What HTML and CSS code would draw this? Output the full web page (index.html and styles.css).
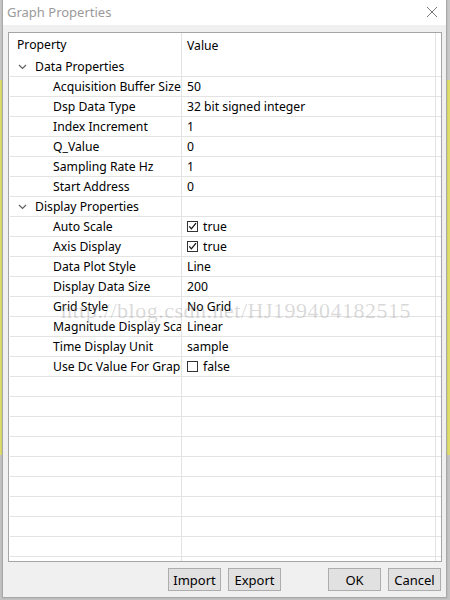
FILE: index.html
```html
<!DOCTYPE html>
<html lang="en">
<head>
  <meta charset="UTF-8" />
  <meta name="viewport" content="width=device-width, initial-scale=1.0">
  <title>Graph Properties</title>
  <link rel="stylesheet" href="styles.css">
</head>
<body>
  <div class="window">
    <div class="titlebar">
      <span class="title">Graph Properties</span>
      <svg class="close" width="12" height="12" viewBox="0 0 12 12">
        <path d="M1 1 L11 11 M11 1 L1 11" stroke="#7a7a7a" stroke-width="1" fill="none" />
      </svg>
    </div>
    <div class="content">
      <div class="grid">
        <div class="head">
          <div class="cell name">Property</div>
          <div class="cell value">Value</div>
        </div>

        <div class="row cat">
          <div class="cell name"><svg class="chev" width="9" height="6" viewBox="0 0 9 6"><path d="M1 1 L4.5 4.5 L8 1" stroke="#606060" stroke-width="1.2" fill="none" /></svg>Data Properties</div>
          <div class="cell value"></div>
        </div>
        <div class="row"><div class="cell name">Acquisition Buffer Size</div><div class="cell value">50</div></div>
        <div class="row"><div class="cell name">Dsp Data Type</div><div class="cell value">32 bit signed integer</div></div>
        <div class="row"><div class="cell name">Index Increment</div><div class="cell value">1</div></div>
        <div class="row"><div class="cell name">Q_Value</div><div class="cell value">0</div></div>
        <div class="row"><div class="cell name">Sampling Rate Hz</div><div class="cell value">1</div></div>
        <div class="row"><div class="cell name">Start Address</div><div class="cell value">0</div></div>

        <div class="row cat">
          <div class="cell name"><svg class="chev" width="9" height="6" viewBox="0 0 9 6"><path d="M1 1 L4.5 4.5 L8 1" stroke="#606060" stroke-width="1.2" fill="none" /></svg>Display Properties</div>
          <div class="cell value"></div>
        </div>
        <div class="row"><div class="cell name">Auto Scale</div><div class="cell value"><svg class="check" width="11" height="11" viewBox="0 0 11 11"><rect x="0.5" y="0.5" width="10" height="10" fill="#fff" stroke="#333" /><path d="M2.3 5.3 L4.4 7.8 L9 2.2" stroke="#111" stroke-width="1.3" fill="none" /></svg>true</div></div>
        <div class="row"><div class="cell name">Axis Display</div><div class="cell value"><svg class="check" width="11" height="11" viewBox="0 0 11 11"><rect x="0.5" y="0.5" width="10" height="10" fill="#fff" stroke="#333" /><path d="M2.3 5.3 L4.4 7.8 L9 2.2" stroke="#111" stroke-width="1.3" fill="none" /></svg>true</div></div>
        <div class="row"><div class="cell name">Data Plot Style</div><div class="cell value">Line</div></div>
        <div class="row"><div class="cell name">Display Data Size</div><div class="cell value">200</div></div>
        <div class="row"><div class="cell name">Grid Style</div><div class="cell value">No Grid</div></div>
        <div class="row"><div class="cell name">Magnitude Display Scale</div><div class="cell value">Linear</div></div>
        <div class="row"><div class="cell name">Time Display Unit</div><div class="cell value">sample</div></div>
        <div class="row"><div class="cell name">Use Dc Value For Graph</div><div class="cell value"><svg class="check" width="11" height="11" viewBox="0 0 11 11"><rect x="0.5" y="0.5" width="10" height="10" fill="#fff" stroke="#333" /></svg>false</div></div>

        <div class="row"><div class="cell name"></div><div class="cell value"></div></div>
        <div class="row"><div class="cell name"></div><div class="cell value"></div></div>
        <div class="row"><div class="cell name"></div><div class="cell value"></div></div>
        <div class="row"><div class="cell name"></div><div class="cell value"></div></div>
        <div class="row"><div class="cell name"></div><div class="cell value"></div></div>
        <div class="row"><div class="cell name"></div><div class="cell value"></div></div>
        <div class="row"><div class="cell name"></div><div class="cell value"></div></div>
        <div class="row"><div class="cell name"></div><div class="cell value"></div></div>
        <div class="row"><div class="cell name"></div><div class="cell value"></div></div>
        <div class="row"><div class="cell name"></div><div class="cell value"></div></div>

        <div class="watermark">http://blog.csdn.net/HJ199404182515</div>
      </div>

      <div class="buttons">
        <button class="btn">Import</button>
        <button class="btn">Export</button>
        <button class="btn wide-gap">OK</button>
        <button class="btn">Cancel</button>
      </div>
    </div>
  </div>
</body>
</html>
```

FILE: styles.css
```css
html,
body {
  margin: 0;
  height: 100%;
}
body {
  font-family: "Noto Sans", "Open Sans", sans-serif;
  font-size: 12.2px;
  color: #000;
  background: linear-gradient(to bottom, #c9c9c9 0, #c9c9c9 80px, #dedd6c 80px, #dedd6c 455px, #c4c4c4 455px);
}
.window {
  margin-left: 2px;
  width: 445px;
  height: 598px;
  box-sizing: border-box;
  border: 1px solid #a9a9a9;
  border-top: none;
  background-color: #f0f0f0;
  display: flex;
  flex-direction: column;
  box-shadow: 0 0 2px rgba(0, 0, 0, 0.15);
}
.titlebar {
  height: 25px;
  background-color: #fff;
  display: flex;
  align-items: center;
  justify-content: space-between;
  padding: 0 8px 0 4px;
  flex-shrink: 0;
}
.title {
  font-size: 13px;
  color: #9a9a9a;
  margin-top: -1px;
}
.close {
  margin-top: -1px;
}
.content {
  flex: 1;
  display: flex;
  flex-direction: column;
  padding: 7px 4px 0 5px;
}
.grid {
  position: relative;
  height: 530px;
  box-sizing: border-box;
  border: 1px solid #a5a5a5;
  background-color: #fff;
  padding-left: 1px;
  overflow: hidden;
}
.head,
.row {
  display: flex;
  width: 431px;
}
.head {
  height: 24px;
}
.row {
  height: 20px;
  box-sizing: border-box;
  border-bottom: 1px solid #e3e3e3;
}
.cell {
  box-sizing: border-box;
  white-space: nowrap;
  overflow: hidden;
  line-height: 19px;
}
.head .cell {
  line-height: 23px;
}
.name {
  width: 172px;
  border-right: 1px solid #e3e3e3;
  padding-left: 43px;
}
.value {
  width: 254px;
  border-right: 1px solid #e3e3e3;
  padding-left: 5px;
  display: flex;
  align-items: center;
}
.head .name {
  padding-left: 7px;
}
.cat .name {
  padding-left: 8px;
  display: flex;
  align-items: center;
}
.chev {
  margin-right: 8px;
  margin-top: 1px;
}
.check {
  margin-right: 5px;
  margin-top: -1px;
}
.watermark {
  position: absolute;
  left: 52px;
  top: 265px;
  font-family: "Liberation Serif", serif;
  font-size: 22px;
  letter-spacing: 0.5px;
  color: rgba(120, 120, 120, 0.28);
  white-space: nowrap;
  pointer-events: none;
}
.buttons {
  display: flex;
  justify-content: flex-end;
  gap: 7px;
  padding-top: 6px;
  padding-right: 1px;
}
.btn {
  width: 53px;
  height: 23px;
  padding: 0;
  font-family: "Noto Sans", "Open Sans", sans-serif;
  font-size: 13px;
  color: #000;
  background-color: #e1e1e1;
  border: 1px solid #adadad;
  border-radius: 0;
}
.wide-gap {
  margin-left: 40px;
}
```
